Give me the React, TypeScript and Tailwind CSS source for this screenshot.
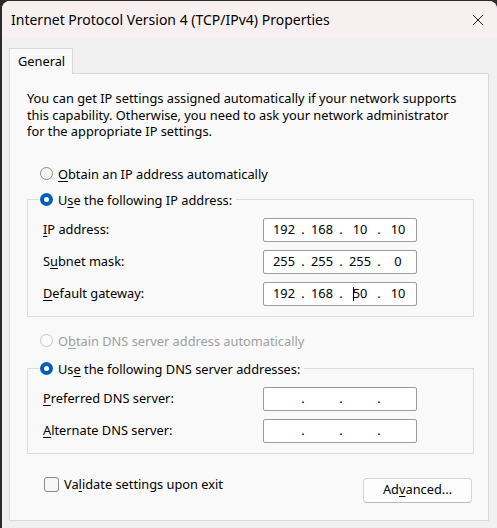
import React from "react";

const U = ({ c }: { c: string }) => <span className="underline underline-offset-[2px] decoration-[1px]">{c}</span>;

function Radio({ checked, disabled }: { checked?: boolean; disabled?: boolean }) {
  if (checked) {
    return (
      <span className="w-[13px] h-[13px] rounded-full bg-[#005fb8] flex items-center justify-center shrink-0">
        <span className="w-[5px] h-[5px] rounded-full bg-white" />
      </span>
    );
  }
  return (
    <span
      className={
        "w-[13px] h-[13px] rounded-full border shrink-0 " +
        (disabled ? "border-[#c6c6c6] bg-[#fbfbfb]" : "border-[#8a8a8a] bg-[#f6f6f6]")
      }
    />
  );
}

function IpBox({ parts, cursor }: { parts: string[]; cursor?: number }) {
  return (
    <div className="w-[154px] h-[24px] border border-[#9b9b9b] rounded-[2px] bg-white flex items-center pl-[3px]">
      {parts.map((p, i) => (
        <React.Fragment key={i}>
          <span className="w-[34px] text-center leading-none">
            {cursor === i && <span className="inline-block w-px h-[14px] bg-black align-[-3px] -mr-px" />}
            {p}
          </span>
          {i < 3 && <span className="w-[4px] text-center leading-none">.</span>}
        </React.Fragment>
      ))}
    </div>
  );
}

function Row({ label, parts, cursor }: { label: React.ReactNode; parts: string[]; cursor?: number }) {
  return (
    <div className="flex items-center justify-between pr-[56px] h-[24px]">
      <span>{label}</span>
      <IpBox parts={parts} cursor={cursor} />
    </div>
  );
}

export default function App() {
  return (
    <div className="w-[497px] h-[528px] bg-[#2b2b2b] pl-[2px] pt-[1px] overflow-hidden font-['Noto_Sans',sans-serif] text-[12.8px] text-black">
      <div className="h-full rounded-t-[8px] bg-[#f0f0f0] flex flex-col overflow-hidden">
        <div className="h-[37px] bg-[#f8f0f0] flex items-center justify-between pl-[9px] pr-[13px] shrink-0">
          <span className="text-[14px]">Internet Protocol Version 4 (TCP/IPv4) Properties</span>
          <svg width="12" height="12" viewBox="0 0 12 12">
            <path d="M1 1 L11 11 M11 1 L1 11" stroke="#1a1a1a" strokeWidth="1" />
          </svg>
        </div>
        <div className="pt-[10px] pl-[7px] pr-[8px] flex flex-col flex-1">
          <div className="flex">
            <div className="w-[64px] h-[26px] bg-[#f9f9f9] border border-b-0 border-[#d9d9d9] -mb-px relative z-10 flex items-center pl-[8px]">
              General
            </div>
          </div>
          <div className="w-[480px] h-[448px] border border-[#d9d9d9] bg-[#f9f9f9] pl-[17px] pr-[14px] pt-[16px] flex flex-col">
            <p className="leading-[16.5px]">
              You can get IP settings assigned automatically if your network supports
              <br />
              this capability. Otherwise, you need to ask your network administrator
              <br />
              for the appropriate IP settings.
            </p>
            <div className="flex items-center gap-[5px] pl-[13px] mt-[26px] h-[16px] leading-[16px]">
              <Radio />
              <span><U c="O" />btain an IP address automatically</span>
            </div>
            <fieldset className="border border-[#dcdcdc] mt-[10px] pl-[15px] pb-[10px] pt-[10px] flex flex-col gap-[8px]">
              <legend className="-ml-[4px] pl-[1px] pr-[4px] h-[16px] leading-[16px] flex items-center gap-[5px]">
                <Radio checked />
                <span>U<U c="s" />e the following IP address:</span>
              </legend>
              <Row label={<><U c="I" />P address:</>} parts={["192", "168", "10", "10"]} />
              <Row label={<>S<U c="u" />bnet mask:</>} parts={["255", "255", "255", "0"]} />
              <Row label={<><U c="D" />efault gateway:</>} parts={["192", "168", "50", "10"]} cursor={2} />
            </fieldset>
            <div className="flex items-center gap-[5px] pl-[13px] mt-[16px] h-[16px] leading-[16px] text-[#a0a0a0]">
              <Radio disabled />
              <span>O<U c="b" />tain DNS server address automatically</span>
            </div>
            <fieldset className="border border-[#dcdcdc] mt-[12px] pl-[15px] pb-[10px] pt-[10px] flex flex-col gap-[8px]">
              <legend className="-ml-[4px] pl-[1px] pr-[4px] h-[16px] leading-[16px] flex items-center gap-[5px]">
                <Radio checked />
                <span>Us<U c="e" /> the following DNS server addresses:</span>
              </legend>
              <Row label={<><U c="P" />referred DNS server:</>} parts={["", "", "", ""]} />
              <Row label={<><U c="A" />lternate DNS server:</>} parts={["", "", "", ""]} />
            </fieldset>
            <div className="flex items-start justify-between mt-[23px]">
              <div className="flex items-center gap-[5px] pl-[17px] h-[15px] leading-[15px]">
                <span className="w-[15px] h-[15px] rounded-[3px] border border-[#8a8a8a] bg-[#f6f6f6]" />
                <span>Va<U c="l" />idate settings upon exit</span>
              </div>
              <button className="w-[109px] h-[25px] mt-[1px] rounded-[4px] border border-[#d4d4d4] border-b-[#bcbcbc] bg-[#fdfdfd] flex items-center justify-center mr-[2px]">
                Ad<U c="v" />anced...
              </button>
            </div>
          </div>
        </div>
      </div>
    </div>
  );
}
